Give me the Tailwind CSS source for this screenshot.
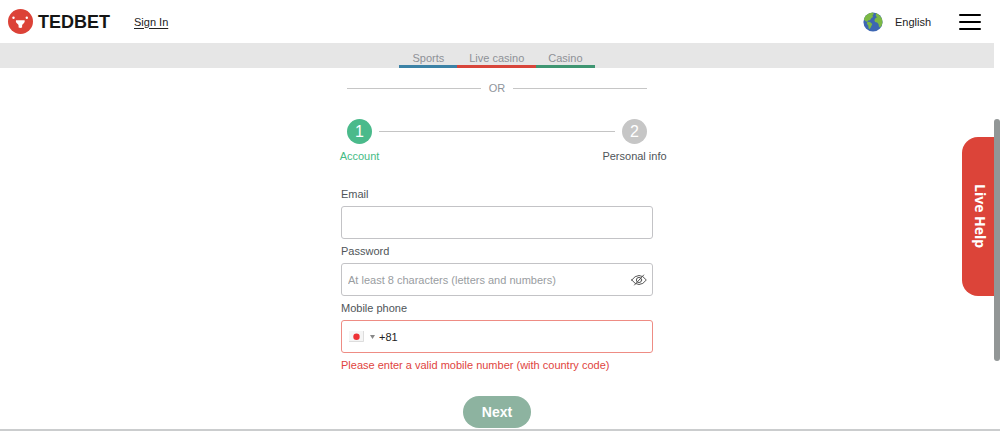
<!DOCTYPE html>
<html lang="en">
<head>
<meta charset="utf-8">
<meta name="viewport" content="width=device-width, initial-scale=1">
<title>TEDBET – Register</title>
<script src="https://cdn.jsdelivr.net/npm/@tailwindcss/browser@4"></script>
</head>
<body class="flex h-screen flex-col overflow-hidden bg-white font-['Liberation_Sans',Arial,sans-serif] text-[11px] leading-4 text-[#4f5559]">
  <div class="flex-1 pr-1.5">
    <header class="flex h-[43px] items-center pr-[13px] pl-2 text-[#222]">
      <a href="#" class="flex items-center gap-[5px]" aria-label="TEDBET">
        <svg class="size-[25px]" viewBox="0 0 25 25" aria-hidden="true">
          <circle cx="12.5" cy="12.500" r="12.5" fill="#dc4237"/>
          <g fill="#fff">
            <circle cx="5.500" cy="8.800" r="1.200"/><circle cx="18.800" cy="8.800" r="1.200"/>
            <path d="M8 11.300h8.600c.5 1.600-.3 2.800-1.300 3.400-.9.500-1.200 1.200-1.200 2.200v1.700q-1.800.8-3.500 0v-1.700c0-1-.3-1.700-1.200-2.200-1.100-.6-1.900-1.800-1.400-3.400z"/>
          </g>
        </svg>
        <span class="text-[18px] leading-6 font-bold text-[#151515]">TEDBET</span>
      </a>
      <a href="#" class="ml-6 underline underline-offset-2">Sign In</a>
      <button type="button" class="ml-auto flex items-center gap-3">
        <svg class="size-5" viewBox="0 0 20 20" aria-hidden="true">
          <circle cx="10" cy="10" r="9.600" fill="#3c66b3"/>
          <g fill="#7cb944">
            <path d="M3.200 3.200Q6 .6 9.600.4L11 1.700 9.500 3.600 10 5 8.200 6.300 7 8.300 5 8.600 4.600 9.800 3 9.600.8 7.500Q1.500 5 3.200 3.200z"/>
            <path d="M4.500 9.800l2.500.2 2.300 2-1 2.200-1.500 2.700-1.100-.5-.4-3-1.500-1.600z"/>
            <path d="M13 .9Q17.600 3 19.200 7.400q.8 3.400-.7 6.500l-1.600 1.600-1-.9-.4-2.700-1.400-1.300-2.100-.5-.6-2.100 1.200-2 1.600-.7-1.500-1.300z"/>
          </g>
        </svg>
        <span>English</span>
      </button>
      <button type="button" aria-label="Menu" class="ml-7 flex flex-col gap-[5px]">
        <span class="h-[2px] w-[22px] rounded-full bg-black"></span>
        <span class="h-[2px] w-[22px] rounded-full bg-black"></span>
        <span class="h-[2px] w-[22px] rounded-full bg-black"></span>
      </button>
    </header>

    <nav class="flex h-[25px] items-end justify-center bg-[#e6e6e6] text-[#8e9196]">
      <a href="#" class="border-b-[3px] border-[#3b82a6] px-[13px] leading-[14px]">Sports</a>
      <a href="#" class="border-b-[3px] border-[#d8453a] px-3 leading-[14px]">Live casino</a>
      <a href="#" class="border-b-[3px] border-[#3f9672] px-3 leading-[14px]">Casino</a>
    </nav>

    <main class="mx-auto w-full max-w-[312px] pt-3">
      <div class="mx-1.5 flex items-center gap-2 text-[#8f949b]">
        <span class="h-px flex-1 bg-[#c6c6c6]"></span>OR<span class="h-px flex-1 bg-[#c6c6c6]"></span>
      </div>

      <ol class="mt-[23px] flex justify-between px-1.5">
        <li class="flex w-[25px] flex-col items-center gap-1 text-[#44bb85]">
          <span class="flex size-[25px] items-center justify-center rounded-full bg-[#4aba8b] text-base text-white">1</span>
          <span>Account</span>
        </li>
        <li class="mx-[7px] mt-3 h-px flex-1 bg-[#c4c4c4]" aria-hidden="true"></li>
        <li class="flex w-[25px] flex-col items-center gap-1">
          <span class="flex size-[25px] items-center justify-center rounded-full bg-[#c6c6c6] text-base text-white">2</span>
          <span class="whitespace-nowrap">Personal info</span>
        </li>
      </ol>

      <form class="mt-[22px] flex flex-col">
        <label for="email">Email</label>
        <input id="email" type="email" class="mt-1 h-[33px] rounded-[3px] border border-[#c3c3c6] px-1.5 outline-none">
        <label for="password" class="mt-1">Password</label>
        <div class="mt-1 flex h-[33px] items-center rounded-[3px] border border-[#c3c3c6] pr-[5px] pl-1.5">
          <input id="password" type="password" placeholder="At least 8 characters (letters and numbers)" class="min-w-0 flex-1 outline-none placeholder:text-[#999da1]">
          <button type="button" aria-label="Show password">
            <svg class="h-3 w-4" viewBox="0 0 16 12" fill="none" stroke="#555" stroke-width="1" stroke-linecap="round" aria-hidden="true">
              <path d="M.7 6Q4 1.500 8 1.500T15.300 6Q12 10.500 8 10.500T.7 6z"/>
              <circle cx="8" cy="6" r="2.600"/>
              <path d="M3.500 11L12.700 1"/>
            </svg>
          </button>
        </div>
        <label for="phone" class="mt-1">Mobile phone</label>
        <div class="mt-1 flex h-[33px] items-center rounded-[3px] border border-[#ee8c84] pl-[7px]">
          <button type="button" aria-label="Country: Japan" class="flex items-center gap-1.5">
            <svg class="h-[11px] w-[15px]" viewBox="0 0 15 11" aria-hidden="true">
              <path d="M0 0h15v11H0z" fill="#f5f5f5"/><path d="M0 10.500h14.500V0" fill="none" stroke="#ddd"/>
              <circle cx="7.500" cy="5.700" r="3.200" fill="#ee3135"/>
            </svg>
            <svg class="h-1 w-[5px]" viewBox="0 0 5 4" aria-hidden="true"><path d="M0 0h5L2.500 4z" fill="#888"/></svg>
          </button>
          <input id="phone" type="tel" value="+81" aria-describedby="phone-error" class="ml-1 min-w-0 flex-1 text-[#222] outline-none">
        </div>
        <p id="phone-error" class="mt-1 whitespace-nowrap text-[#e0443e]">Please enter a valid mobile number (with country code)</p>
        <button type="button" class="mt-[23px] h-8 self-center rounded-full bg-[#8db3a0] px-[19px] text-sm font-bold text-white">Next</button>
      </form>
    </main>
  </div>

  <button type="button" class="fixed top-[137px] right-1.5 flex h-[159px] w-8 items-center justify-center rounded-l-2xl bg-[#dc4439] pl-1 font-['Open_Sans',sans-serif] text-[14px] font-bold text-white [writing-mode:vertical-rl]">Live Help</button>
  <div class="fixed top-[119px] right-0 h-[242px] w-1.5 rounded-full bg-[#929696]" aria-hidden="true"></div>
  <div class="fixed inset-x-0 bottom-0 h-[2px] bg-[#cbcdce]" aria-hidden="true"></div>
</body>
</html>
